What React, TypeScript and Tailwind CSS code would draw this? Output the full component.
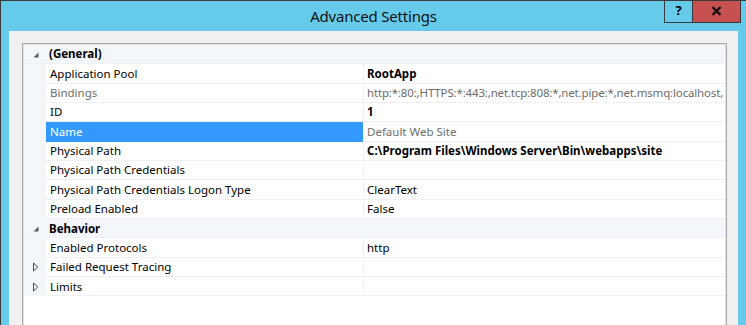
import React from "react";

type Row = {
  kind: "category" | "item" | "collapsed";
  name: string;
  value?: string;
  bold?: boolean;
  dim?: boolean;
  selected?: boolean;
  tight?: boolean;
};

const rows: Row[] = [
  { kind: "category", name: "(General)" },
  { kind: "item", name: "Application Pool", value: "RootApp", bold: true },
  {
    kind: "item",
    name: "Bindings",
    value: "http:*:80:,HTTPS:*:443:,net.tcp:808:*,net.pipe:*,net.msmq:localhost,",
    dim: true,
    tight: true,
  },
  { kind: "item", name: "ID", value: "1", bold: true },
  { kind: "item", name: "Name", value: "Default Web Site", dim: true, selected: true },
  {
    kind: "item",
    name: "Physical Path",
    value: "C:\\Program Files\\Windows Server\\Bin\\webapps\\site",
    bold: true,
  },
  { kind: "item", name: "Physical Path Credentials", value: "" },
  { kind: "item", name: "Physical Path Credentials Logon Type", value: "ClearText" },
  { kind: "item", name: "Preload Enabled", value: "False" },
  { kind: "category", name: "Behavior" },
  { kind: "item", name: "Enabled Protocols", value: "http" },
  { kind: "collapsed", name: "Failed Request Tracing", value: "" },
  { kind: "collapsed", name: "Limits", value: "" },
];

function ExpandedGlyph() {
  return (
    <svg width="6" height="6" viewBox="0 0 6 6">
      <polygon points="5.5,0.5 5.5,5.5 0.5,5.5" fill="#5b5b5b" />
    </svg>
  );
}

function CollapsedGlyph() {
  return (
    <svg width="6" height="10" viewBox="0 0 6 10">
      <polygon
        points="0.5,1 4.8,5 0.5,9"
        fill="none"
        stroke="#4a4a4a"
        strokeWidth="1"
      />
    </svg>
  );
}

function GridRow({ row }: { row: Row }) {
  if (row.kind === "category") {
    return (
      <div className="flex h-[19.35px] bg-[#f3f6fb] border-b border-[#eef1f6] items-center">
        <div className="w-[22px] flex justify-end pr-[7px] pt-[2px]">
          <ExpandedGlyph />
        </div>
        <div className="pl-[3px] font-bold text-black">{row.name}</div>
      </div>
    );
  }

  return (
    <div className="flex h-[19.35px] bg-[#f3f6fb]">
      <div className="w-[22px] shrink-0 flex items-center pl-[9px]">
        {row.kind === "collapsed" && <CollapsedGlyph />}
      </div>
      <div
        className={`w-[317px] shrink-0 flex items-center pl-[4px] border-b ${
          row.selected
            ? "bg-[#3399ff] text-white border-[#3399ff]"
            : row.dim
            ? "bg-white text-[#6d6d6d] border-[#eef0f4]"
            : "bg-white text-black border-[#eef0f4]"
        }`}
      >
        {row.name}
      </div>
      <div className="w-px shrink-0 bg-[#eef0f4]" />
      <div
        className={`flex-1 min-w-0 flex items-center pl-[3px] bg-white border-b border-[#eef0f4] overflow-hidden whitespace-nowrap ${
          row.bold ? "font-bold text-black" : row.dim ? "text-[#6d6d6d]" : "text-black"
        } ${row.tight ? "tracking-[-0.16px]" : ""}`}
      >
        {row.value}
      </div>
    </div>
  );
}

export default function App() {
  return (
    <div
      className="
        w-[746px]
        h-[325px]
        overflow-hidden
        bg-[#66cbea]
        border-t
        border-l
        border-[#3a3a3a]
        flex
        flex-col
        font-['Noto_Sans',sans-serif]
      "
    >
      <div className="h-[30px] shrink-0 relative flex justify-center items-center">
        <span className="text-[15px] text-[#111] mt-[1px] tracking-[-0.2px]">
          Advanced Settings
        </span>

        <div className="absolute right-[5px] top-[-1px] flex">
          <div className="w-[28px] h-[23px] border-l border-b border-[#3a3a3a] flex items-center justify-center text-[13px] font-bold text-black">
            ?
          </div>
          <div className="w-[49px] h-[23px] bg-[#c75050] border-l border-r border-b border-[#3a3a3a] flex items-center justify-center">
            <svg width="11" height="10" viewBox="0 0 11 10">
              <path d="M1.5 1 L9.5 9 M9.5 1 L1.5 9" stroke="#111" strokeWidth="2.4" />
            </svg>
          </div>
        </div>
      </div>

      <div className="flex-1 ml-[8px] mr-[8px] bg-[#f0f0f0] pt-[12px] pl-[13px] pr-[11px] flex flex-col min-h-0">
        <div className="flex-1 bg-white border-t border-l border-r border-[#a9a9a9] text-[11.5px] leading-none">
          <div className="border-t border-l border-r border-[#e3e3e3] h-full">
            {rows.map((row) => (
              <GridRow key={row.name} row={row} />
            ))}
          </div>
        </div>
      </div>
    </div>
  );
}
